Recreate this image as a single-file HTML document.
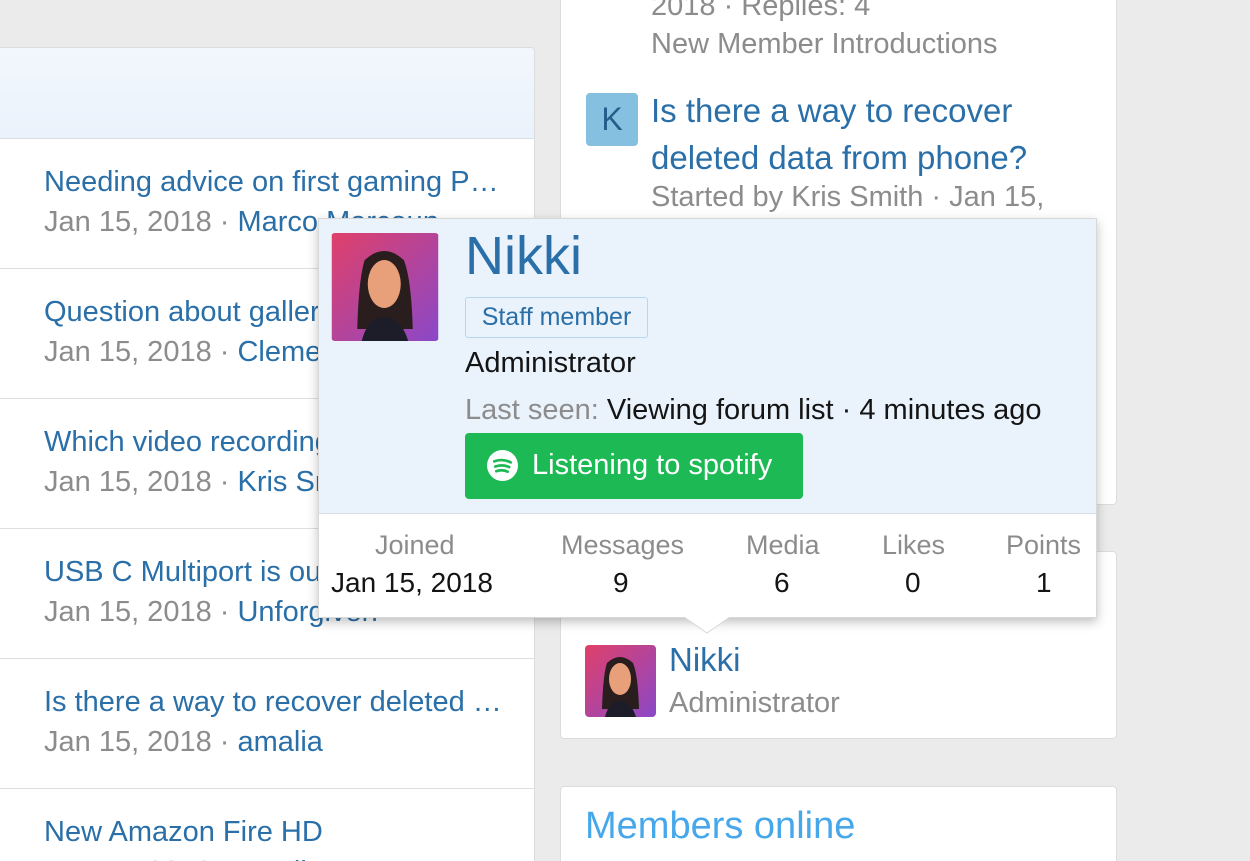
<!DOCTYPE html>
<html><head><meta charset="utf-8"><style>
*{box-sizing:border-box;margin:0;padding:0}
html,body{width:1250px;height:861px;overflow:hidden}
body{background:#ebebeb;font-family:"Liberation Sans",sans-serif;position:relative}
.abs{position:absolute;white-space:nowrap}
.blue{color:#2a6fa8}
.grey{color:#8c8c8c}
.panel{position:absolute;background:#fff;border:1px solid #dcdcdc;border-radius:4px}
.row{position:absolute;left:0;width:540px;height:130px;border-top:1px solid #dedede;background:#fff}
.row .t{position:absolute;left:48px;top:27px;font-size:29px;color:#2a6fa8;white-space:nowrap}
.row .m{position:absolute;left:48px;top:67px;font-size:29px;color:#8c8c8c;white-space:nowrap}
.row .m span{color:#2a6fa8}
.av{position:absolute;border-radius:4px;overflow:hidden}
</style></head><body>
<div class="panel" style="left:-5px;top:47px;width:540px;height:814px;overflow:hidden;border-bottom:none;border-radius:4px 4px 0 0">
 <div style="height:90px;background:linear-gradient(#f2f7fd,#eaf2fb)"></div>
 <div class="row" style="top:90px"><div class="t">Needing advice on first gaming P…</div><div class="m">Jan 15, 2018 · <span>Marco Marcoun</span></div></div>
 <div class="row" style="top:220px"><div class="t">Question about gallery</div><div class="m">Jan 15, 2018 · <span>Clement</span></div></div>
 <div class="row" style="top:350px"><div class="t">Which video recording</div><div class="m">Jan 15, 2018 · <span>Kris Smith</span></div></div>
 <div class="row" style="top:480px"><div class="t">USB C Multiport is out</div><div class="m">Jan 15, 2018 · <span>Unforgiven</span></div></div>
 <div class="row" style="top:610px"><div class="t">Is there a way to recover deleted …</div><div class="m">Jan 15, 2018 · <span>amalia</span></div></div>
 <div class="row" style="top:740px"><div class="t">New Amazon Fire HD</div><div class="m">Jan 15, 2018 · <span>amalia</span></div></div>
</div>

<div class="panel" style="left:560px;top:-20px;width:557px;height:525px">
 <div class="abs grey" style="left:90px;top:9px;font-size:29px">2018 · Replies: 4</div>
 <div class="abs grey" style="left:90px;top:47px;font-size:29px">New Member Introductions</div>
 <div class="abs" style="left:25px;top:112px;width:52px;height:53px;background:#86c0e0;border-radius:4px;color:#245e8a;font-size:32px;text-align:center;line-height:53px">K</div>
 <div class="abs blue" style="left:90px;top:106px;font-size:33px;line-height:47px">Is there a way to recover<br>deleted data from phone?</div>
 <div class="abs grey" style="left:90px;top:200px;font-size:29px">Started by Kris Smith · Jan 15,</div>
</div>

<div class="panel" style="left:560px;top:551px;width:557px;height:188px">
 <div class="av" style="left:24px;top:93px;width:71px;height:72px"><svg width="71" height="72" viewBox="0 0 71 72"><defs><linearGradient id="g2" x1="0" y1="0" x2="1" y2="1"><stop offset="0" stop-color="#e0406a"/><stop offset="1" stop-color="#8a48c8"/></linearGradient></defs><rect width="71" height="72" fill="url(#g2)"/><path d="M17 64 Q18 30 22 18 Q35 6 48 18 Q53 30 54 64 Z" fill="#2a1d1d"/><ellipse cx="35" cy="34" rx="11" ry="16" fill="#e8a07a"/><path d="M20 72 Q24 56 35 56 Q46 56 51 72Z" fill="#1d1d2a"/></svg></div>
 <div class="abs blue" style="left:108px;top:89px;font-size:33px">Nikki</div>
 <div class="abs grey" style="left:108px;top:135px;font-size:29px">Administrator</div>
</div>

<div class="panel" style="left:560px;top:786px;width:557px;height:75px;border-bottom:none;border-radius:4px 4px 0 0">
 <div class="abs" style="left:24px;top:18px;font-size:38px;color:#47a7eb">Members online</div>
</div>

<!-- popup -->
<div class="abs" style="left:318px;top:218px;width:779px;height:400px;background:#fff;border:1px solid #d8d8d8;box-shadow:0 4px 10px rgba(0,0,0,.25)">
 <div style="height:295px;background:#eaf3fc;border-bottom:1px solid #d8dde3;position:relative">
  <div class="av" style="left:12px;top:14px;width:108px;height:108px"><svg width="108" height="108" viewBox="0 0 71 72"><defs><linearGradient id="g1" x1="0" y1="0" x2="1" y2="1"><stop offset="0" stop-color="#e0406a"/><stop offset="1" stop-color="#8a48c8"/></linearGradient></defs><rect width="71" height="72" fill="url(#g1)"/><path d="M17 64 Q18 30 22 18 Q35 6 48 18 Q53 30 54 64 Z" fill="#2a1d1d"/><ellipse cx="35" cy="34" rx="11" ry="16" fill="#e8a07a"/><path d="M20 72 Q24 56 35 56 Q46 56 51 72Z" fill="#1d1d2a"/></svg></div>
  <div class="abs blue" style="left:146px;top:6px;font-size:54px">Nikki</div>
  <div class="abs" style="left:146px;top:78px;width:183px;height:41px;border:1px solid #b8d6ee;border-radius:3px;color:#2a6fa8;font-size:25px;line-height:39px;text-align:center">Staff member</div>
  <div class="abs" style="left:146px;top:128px;font-size:29px;color:#141414">Administrator</div>
  <div class="abs" style="left:146px;top:175px;font-size:29px;color:#141414"><span style="color:#8c8c8c">Last seen:</span> Viewing forum list · 4 minutes ago</div>
  <div class="abs" style="left:146px;top:214px;width:338px;height:66px;background:#1db954;border-radius:4px;color:#fff;font-size:29px;line-height:64px">
   <svg class="abs" style="left:22px;top:17px" width="31" height="31" viewBox="0 0 30 30"><circle cx="15" cy="15" r="15" fill="#fff"/><path d="M7 11 Q15 8 23 12 M8 16 Q15 13.5 21.5 16.5 M9 20.5 Q15 18.5 20 21" stroke="#1db954" stroke-width="2.6" fill="none" stroke-linecap="round"/></svg>
   <span style="position:absolute;left:67px">Listening to spotify</span></div>
 </div>
 <div class="abs" style="left:0;top:311px;width:779px;font-size:27px">
  <div class="abs grey" style="left:56px">Joined</div><div class="abs" style="left:12px;top:37px;color:#141414;font-size:28px">Jan 15, 2018</div>
  <div class="abs grey" style="left:242px">Messages</div><div class="abs" style="left:294px;top:37px;color:#141414;font-size:28px">9</div>
  <div class="abs grey" style="left:427px">Media</div><div class="abs" style="left:455px;top:37px;color:#141414;font-size:28px">6</div>
  <div class="abs grey" style="left:563px">Likes</div><div class="abs" style="left:586px;top:37px;color:#141414;font-size:28px">0</div>
  <div class="abs grey" style="left:687px">Points</div><div class="abs" style="left:717px;top:37px;color:#141414;font-size:28px">1</div>
 </div>
</div>
<svg class="abs" style="left:684px;top:617px" width="46" height="18"><path d="M0 0 L23 16 L46 0Z" fill="#fff"/><path d="M0 0 L23 16 L46 0" stroke="#d8d8d8" fill="none"/></svg>
</body></html>
